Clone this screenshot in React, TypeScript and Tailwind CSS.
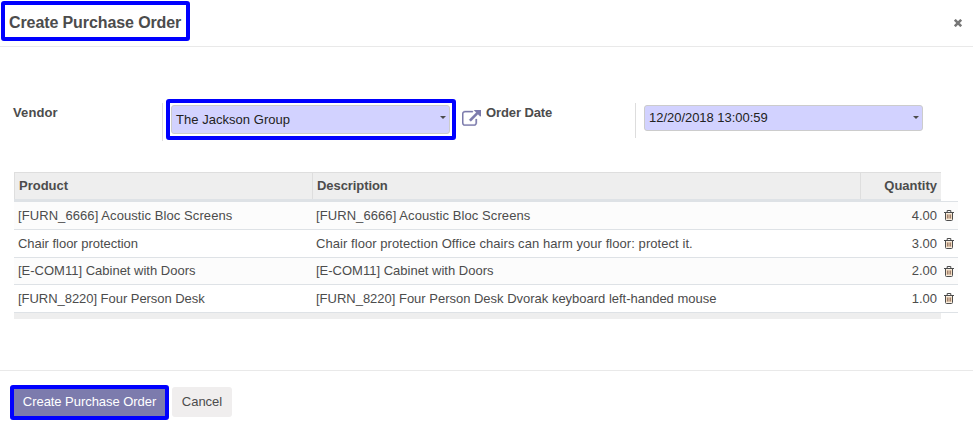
import React from "react";

const lines = [
  { product: "[FURN_6666] Acoustic Bloc Screens", description: "[FURN_6666] Acoustic Bloc Screens", qty: "4.00", row: "h-[28px] bg-[#fcfcfc]", product_tracking: "tracking-[0.08px]", description_tracking: "tracking-[0.08px]" },
  { product: "Chair floor protection", description: "Chair floor protection Office chairs can harm your floor: protect it.", qty: "3.00", row: "h-[28px] bg-white", product_tracking: "tracking-[-0.03px]", description_tracking: "tracking-[0.06px]" },
  { product: "[E-COM11] Cabinet with Doors", description: "[E-COM11] Cabinet with Doors", qty: "2.00", row: "h-[27px] bg-[#fcfcfc]", product_tracking: "tracking-normal", description_tracking: "tracking-normal" },
  { product: "[FURN_8220] Four Person Desk", description: "[FURN_8220] Four Person Desk Dvorak keyboard left-handed mouse", qty: "1.00", row: "h-[28px] bg-white", product_tracking: "tracking-[-0.04px]", description_tracking: "tracking-[-0.01px]" },
];

function TrashIcon() {
  return (
    <svg viewBox="0 0 10 11" className="block h-[11px] w-[10px]" fill="none" stroke="#4c4c4c">
      <path d="M2 3.5h6v6H2z" fill="#f3dcc0" stroke="none" />
      <path d="M0 2.5h10M3.2 2.5V.5h3.6v2M1.5 3v6.5q0 1 1 1h5q1 0 1-1V3" />
      <path d="M3.5 4.5v4M5 4.5v4M6.5 4.5v4" stroke="#8a6a5c" strokeWidth=".8" />
    </svg>
  );
}

function ExternalLinkIcon() {
  return (
    <svg viewBox="0 64 1792 1472" className="block h-[16px] w-[19px]" fill="#7c7bad" stroke="#7c7bad" strokeWidth="30">
      <path d="M1408 928v320q0 119-84.5 203.5t-203.5 84.5h-832q-119 0-203.5-84.5t-84.5-203.5v-832q0-119 84.5-203.5t203.5-84.5h704q14 0 23 9t9 23v64q0 14-9 23t-23 9h-704q-66 0-113 47t-47 113v832q0 66 47 113t113 47h832q66 0 113-47t47-113v-320q0-14 9-23t23-9h64q14 0 23 9t9 23zm384-864v512q0 26-19 45t-45 19-45-19l-176-176-652 652q-10 10-23 10t-23-10l-114-114q-10-10-10-23t10-23l652-652-176-176q-19-19-19-45t19-45 45-19h512q26 0 45 19t19 45z" />
    </svg>
  );
}

function Caret() {
  return <span className="block h-0 w-0 border-x-[3px] border-t-[3px] border-x-transparent border-t-[#4c4c4c]" />;
}

export default function App() {
  return (
    <div className="flex h-[437px] w-[973px] flex-col overflow-hidden bg-white font-['Liberation_Sans',Arial,sans-serif] text-[13px] leading-[18px] text-[#4c4c4c]">
      <header className="flex h-[47px] shrink-0 items-start justify-between border-b border-[#e9e9e9] pt-px pr-[11px] pl-px">
        <h1 className="flex h-[40px] w-[189px] items-center rounded-[3px] border-4 border-[#0000ff] pt-[3px] pl-1 text-base font-bold tracking-[-0.1px] whitespace-nowrap">
          Create Purchase Order
        </h1>
        <button aria-label="Close" className="mt-[18px] block">
          <svg viewBox="0 0 8 8" className="block size-[8px]" stroke="#777" strokeWidth="2.6">
            <path d="M.8.8l6.4 6.4M7.2.8L.8 7.2" />
          </svg>
        </button>
      </header>

      <section className="flex h-[125px] shrink-0 items-start pt-[52px] pl-[13px]">
        <label className="mt-[5px] w-[149px] font-bold tracking-[0.1px]">Vendor</label>
        <div className="mt-1 h-[38px] w-px bg-[#ddd]" />
        <div className="ml-[3px] h-[41px] w-[290px] rounded-[3px] border-4 border-[#0000ff] pt-[2px] pr-[2px] pl-px">
          <div className="flex h-[29px] items-center justify-between rounded-[3px] border border-[#ccc] bg-[#d2d2ff] pr-[3px] pl-1 text-[#222]">
            <span className="tracking-[0.04px]">The Jackson Group</span>
            <span className="pb-[4px]"><Caret /></span>
          </div>
        </div>
        <div className="mt-[11px] ml-[6px]"><ExternalLinkIcon /></div>
        <label className="mt-[5px] ml-[5px] w-[149px] font-bold tracking-[-0.1px]">Order Date</label>
        <div className="mt-1 h-[35px] w-px bg-[#ddd]" />
        <div className="mt-[6px] ml-2 flex h-[26px] w-[279px] items-center justify-between rounded-[3px] border border-[#ccc] bg-[#d2d2ff] pr-[3px] pl-1 text-[#222]">
          <span className="tracking-[-0.03px]">12/20/2018 13:00:59</span>
          <span className="pb-px"><Caret /></span>
        </div>
      </section>

      <section className="ml-[14px] w-[944px] shrink-0">
        <div className="flex h-[27px] w-[927px] border-t border-l border-[#dedede] bg-[#eee] font-bold">
          <div className="w-[298px] border-r border-[#dedede] pt-1 pl-1">Product</div>
          <div className="w-[548px] border-r border-[#dedede] pt-1 pl-1 tracking-[-0.07px]">Description</div>
          <div className="flex-1 pt-1 pr-1 text-right">Quantity</div>
        </div>
        <div className="h-[2px] w-[927px] bg-[#dee2e6]" />
        <div className="h-px bg-[#dee2e6]" />
        {lines.map((line) => (
          <div key={line.product} className={`flex items-center border-b border-[#dee2e6] ${line.row}`}>
            <div className={`w-[298px] pl-1 ${line.product_tracking}`}>{line.product}</div>
            <div className={`w-[549px] pl-1 ${line.description_tracking}`}>{line.description}</div>
            <div className="w-[76px] text-right">{line.qty}</div>
            <div className="ml-[7px]"><TrashIcon /></div>
          </div>
        ))}
        <div className="h-[6px] w-[927px] bg-[#eee]" />
      </section>

      <footer className="mt-[51px] flex flex-1 items-start border-t border-[#e9e9e9] pt-[14px] pl-[10px]">
        <button className="flex h-[35px] w-[159px] items-center justify-center rounded-[3px] border-4 border-[#0000ff] bg-[#7c7bad] pb-px tracking-[-0.05px] whitespace-nowrap text-white">
          Create Purchase Order
        </button>
        <button className="mt-[2px] ml-[3px] flex h-[30px] w-[60px] items-center justify-center rounded-[3px] bg-[#f0eeee] pb-px">
          Cancel
        </button>
      </footer>
    </div>
  );
}
